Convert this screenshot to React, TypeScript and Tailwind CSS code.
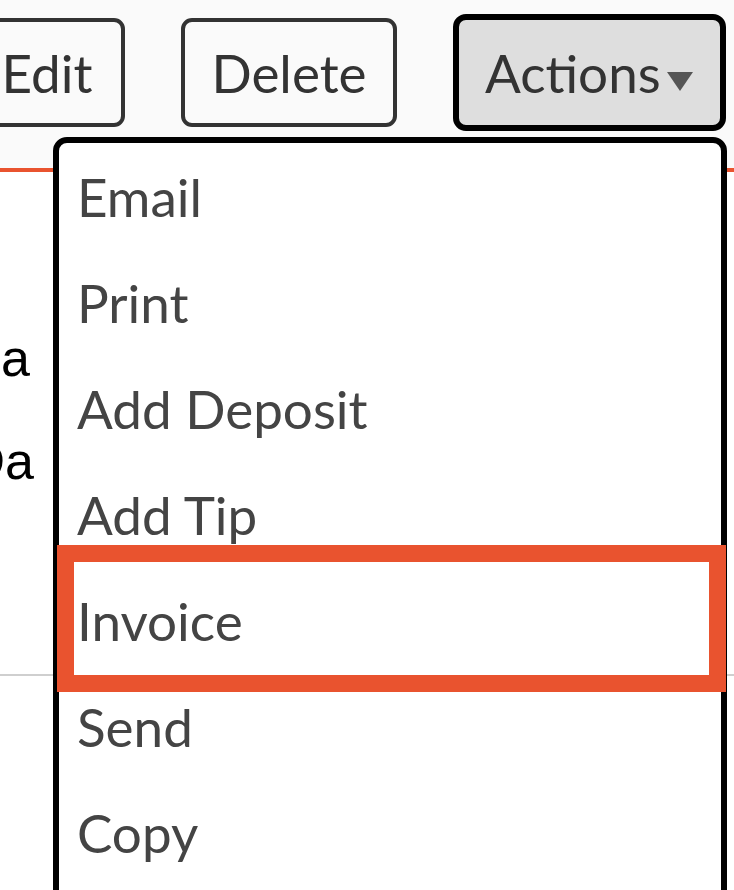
import React from 'react';

const menuItems = ['Email', 'Print', 'Add Deposit', 'Add Tip', 'Invoice', 'Send', 'Copy'];

export default function App() {
    return (
        <div className="relative w-[734px] h-[890px] overflow-hidden bg-white font-['Lato',sans-serif]">
            {/* barra de ações */}
            <div className="h-[172px] bg-[#fafafa] border-b-[4px] border-[#e9532f] pt-[14px] pr-[8px] flex items-start justify-end">
                <div className="flex items-center gap-[56px] h-[117px]">
                    <button className="w-[156px] h-[109px] border-[4px] border-[#333] rounded-[11px] text-[53px] text-[#333] leading-none">
                        Edit
                    </button>
                    <button className="w-[216px] h-[109px] border-[4px] border-[#333] rounded-[11px] text-[53px] text-[#333] leading-none">
                        Delete
                    </button>
                    <button className="w-[273px] h-[117px] border-[6px] border-black rounded-[13px] bg-[#dedede] text-[53px] text-[#333] leading-none flex items-center pl-[26px]">
                        <span>Actions</span>
                        <svg className="ml-[6px] mt-[18px]" width="26" height="19" viewBox="0 0 26 19">
                            <polygon points="0,0 26,0 13,19" fill="#555" />
                        </svg>
                    </button>
                </div>
            </div>

            {/* conteúdo atrás do menu */}
            <div className="h-[504px] border-b-2 border-[#cfcfcf] pt-[135px]">
                <div className="w-[34px] flex flex-col items-end font-['Liberation_Sans',sans-serif] text-[52px] leading-[103px] text-black whitespace-nowrap">
                    <div className="mr-[4px]">a</div>
                    <div className="overflow-hidden w-[34px] flex justify-end">Da</div>
                </div>
            </div>

            {/* menu suspenso */}
            <div className="absolute left-[53px] top-[137px] w-[674px] h-[800px] bg-white border-[6px] border-black rounded-t-[14px]">
                {menuItems.map((item) => (
                    <div key={item} className="h-[106px] flex items-center pl-[18px] text-[53px] text-[#444] leading-none">
                        {item}
                    </div>
                ))}
            </div>

            {/* destaque */}
            <div className="absolute left-[57px] top-[545px] w-[669px] h-[147px] border-[17px] border-[#e9532f]" />
        </div>
    );
}
